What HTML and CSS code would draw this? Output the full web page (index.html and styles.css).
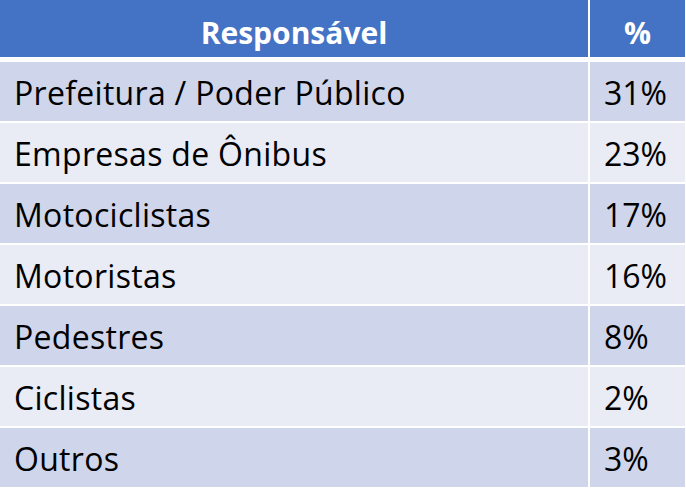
FILE: index.html
```html
<!DOCTYPE html>
<html>
<head>
<meta charset="utf-8">
<link rel="stylesheet" href="styles.css">
</head>
<body>
<div class="table">
  <div class="row head">
    <div class="cell name">Responsável</div>
    <div class="cell pct">%</div>
  </div>
  <div class="row odd">
    <div class="cell name">Prefeitura / Poder Público</div>
    <div class="cell pct">31%</div>
  </div>
  <div class="row even">
    <div class="cell name">Empresas de Ônibus</div>
    <div class="cell pct">23%</div>
  </div>
  <div class="row odd">
    <div class="cell name">Motociclistas</div>
    <div class="cell pct">17%</div>
  </div>
  <div class="row even">
    <div class="cell name">Motoristas</div>
    <div class="cell pct">16%</div>
  </div>
  <div class="row odd">
    <div class="cell name">Pedestres</div>
    <div class="cell pct">8%</div>
  </div>
  <div class="row even">
    <div class="cell name">Ciclistas</div>
    <div class="cell pct">2%</div>
  </div>
  <div class="row odd">
    <div class="cell name">Outros</div>
    <div class="cell pct">3%</div>
  </div>
</div>
</body>
</html>
```
FILE: styles.css
```css
html, body {
  margin: 0;
  padding: 0;
  background: #ffffff;
}
body {
  width: 686px;
  height: 489px;
  overflow: hidden;
  font-family: "Open Sans", Lato, sans-serif;
  color: #000000;
}
.table {
  display: flex;
  flex-direction: column;
  gap: 2px;
  width: 685px;
}
.row {
  display: grid;
  grid-template-columns: 588px 95px;
  column-gap: 2px;
  height: 59px;
}
.row.head {
  height: 57px;
  margin-bottom: 3px;
}
.cell {
  display: flex;
  align-items: center;
  font-size: 32px;
  letter-spacing: 0.3px;
  padding: 2px 14px 0;
  white-space: nowrap;
}
.pct {
  letter-spacing: 0;
}
.head .cell {
  background: #4472c4;
  color: #ffffff;
  font-size: 30px;
  font-weight: 700;
  letter-spacing: 0;
  justify-content: center;
  padding: 7px 0 0;
}
.odd .cell { background: #cfd5ea; }
.even .cell { background: #e9ebf5; }
```
